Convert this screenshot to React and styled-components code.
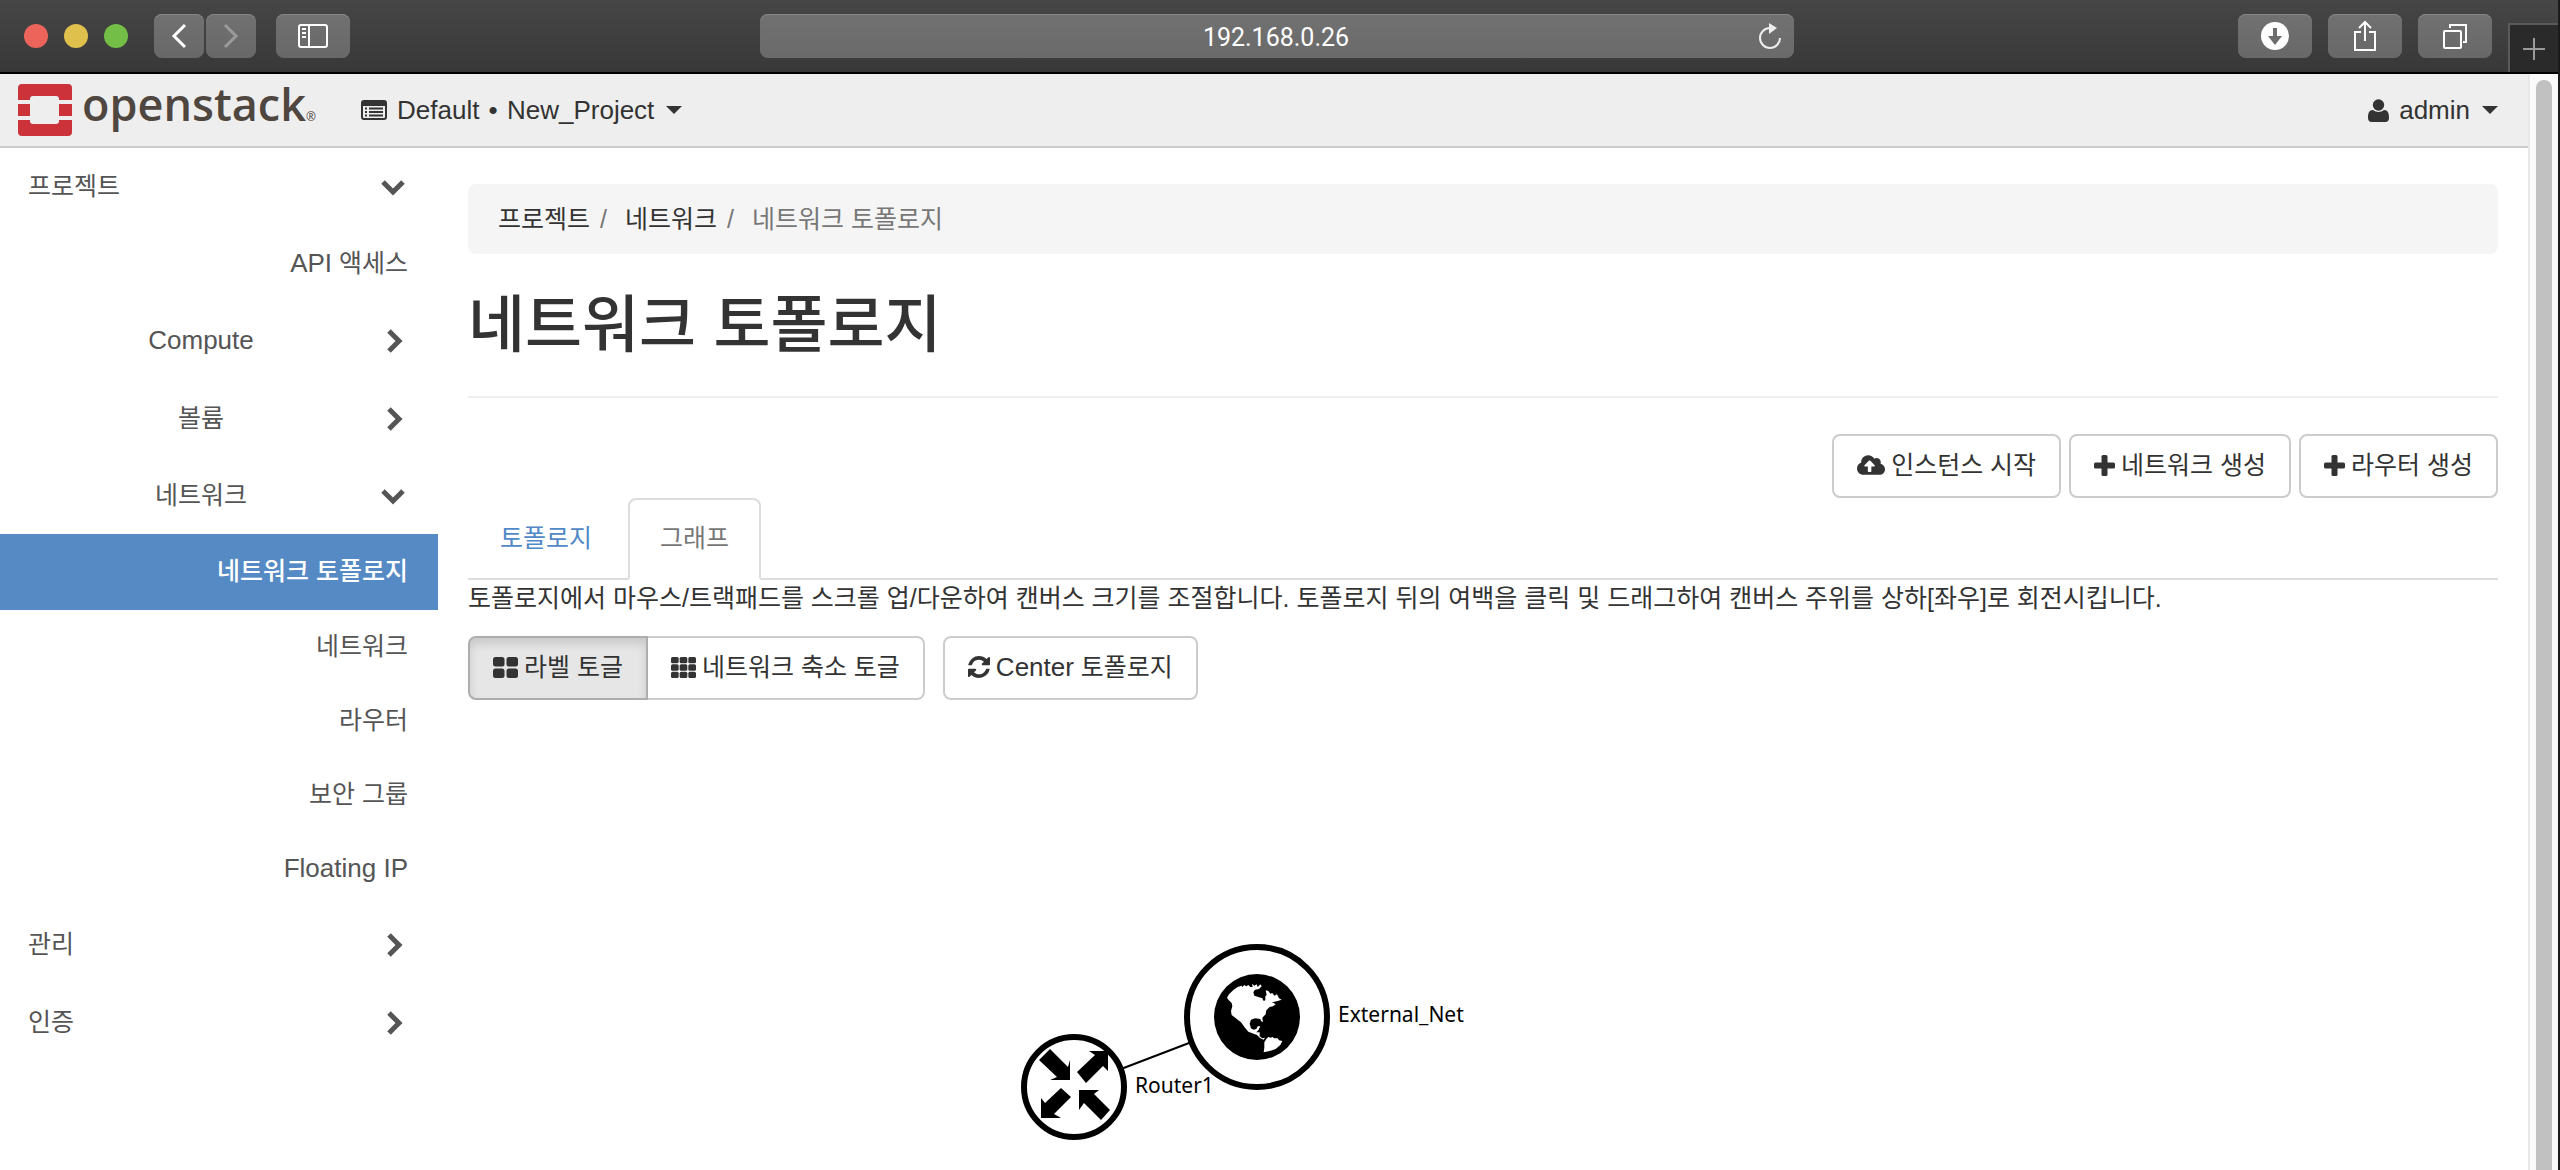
import styled, { createGlobalStyle } from "styled-components";
import { FaCloudUploadAlt } from "react-icons/fa";

const GlobalStyle = createGlobalStyle`
  * {
    box-sizing: border-box;
  }

  body {
    margin: 0;
    background: #fff;
    color: #333;
    font-family: "Liberation Sans", "Noto Sans CJK KR", sans-serif;
    font-size: 25px;
    line-height: 36px;
  }

  button,
  input {
    font: inherit;
    color: inherit;
  }

  a {
    color: inherit;
    text-decoration: none;
  }

  ul,
  ol {
    margin: 0;
    padding: 0;
    list-style: none;
  }
`;

const Window = styled.div`
  display: flex;
  flex-direction: column;
  height: 100vh;
  overflow: hidden;
  border-right: 2px solid #1c1a1c;
`;

/* browser toolbar */

const Toolbar = styled.div`
  display: flex;
  flex: none;
  align-items: flex-start;
  height: 74px;
  padding: 14px 0 0 24px;
  background: linear-gradient(#464646, #383838);
  border-bottom: 2px solid #000;
`;

const Lights = styled.div`
  display: flex;
  gap: 16px;
  align-items: center;
  height: 44px;
  margin-right: 26px;
`;

const Light = styled.span`
  width: 24px;
  height: 24px;
  border-radius: 50%;
  background: ${(props) => props.$color};
`;

const ToolGroup = styled.div`
  display: flex;
  gap: ${(props) => props.$gap}px;
`;

const PageTools = styled(ToolGroup)`
  padding-left: 34px;
`;

const ToolButton = styled.button`
  display: flex;
  align-items: center;
  justify-content: center;
  width: ${(props) => (props.$narrow ? 50 : 74)}px;
  height: 44px;
  padding: 0;
  border: 0;
  border-radius: 8px;
  background: linear-gradient(#717171, #686868);
  box-shadow: inset 0 1px 0 #868686;
  color: ${(props) => (props.$dim ? "#9a9a9a" : "#fff")};
`;

const Address = styled.div`
  display: flex;
  flex: 0 1 1034px;
  align-items: center;
  height: 44px;
  margin: 0 auto;
  padding: 0 12px 0 34px;
  border-radius: 8px;
  background: linear-gradient(#717171, #6a6a6a);
  box-shadow: inset 0 1px 0 #868686;
`;

const AddressInput = styled.input`
  flex: 1;
  min-width: 0;
  height: 44px;
  padding: 2px 0 0;
  border: 0;
  background: none;
  color: #fff;
  font-family: Roboto, sans-serif;
  text-align: center;
`;

const Reload = styled.button`
  display: flex;
  padding: 0;
  border: 0;
  background: none;
`;

const NewTab = styled.button`
  display: flex;
  align-items: center;
  justify-content: center;
  align-self: flex-end;
  width: 50px;
  height: 49px;
  margin-left: 16px;
  padding: 0;
  border: 0;
  border-top: 2px solid #5a5a5a;
  border-left: 2px solid #5a5a5a;
  background: #2a2a2a;
`;

const Viewport = styled.div`
  display: flex;
  flex: 1;
  min-height: 0;
`;

const Page = styled.div`
  flex: 1;
  min-width: 0;
`;

const ScrollTrack = styled.div`
  width: 30px;
  padding: 6px 6px 0;
  background: #fafafa;
  border-left: 2px solid #e8e8e8;
`;

const ScrollThumb = styled.div`
  width: 16px;
  height: 100%;
  border-radius: 8px 8px 0 0;
  background: #c1c1c1;
`;

/* page header */

const Header = styled.header`
  display: flex;
  align-items: center;
  justify-content: space-between;
  height: 74px;
  padding: 0 30px 0 18px;
  background: #eee;
  border-bottom: 2px solid #ccc;
`;

const HeaderLeft = styled.div`
  display: flex;
  align-items: center;
`;

const Brand = styled.a`
  display: flex;
  align-items: center;
  gap: 10px;
  width: 343px;
`;

const BrandName = styled.span`
  color: #4f463f;
  font-family: "Open Sans", sans-serif;
  font-size: 45px;
  font-weight: 600;
  line-height: 52px;

  small {
    font-size: 12px;
    font-weight: 400;
  }
`;

const Menu = styled.button`
  display: flex;
  align-items: center;
  gap: ${(props) => props.$gap}px;
  padding: 0;
  border: 0;
  background: none;
  font-size: 26px;

  svg:last-child {
    margin-left: ${(props) => 12 - props.$gap}px;
  }
`;

const Bullet = styled.span`
  padding: 0 2px;
`;

const Columns = styled.div`
  display: flex;
  align-items: flex-start;
`;

/* sidebar */

const Sidebar = styled.nav`
  flex: none;
  width: 438px;
`;

const SideLink = styled.a`
  display: grid;
  grid-template-columns: 1fr 24px;
  align-items: center;
  height: ${(props) => props.$height || 78}px;
  padding: 0 33px 0 28px;
  color: #555;

  span {
    padding-bottom: 2px;
  }
`;

const SubLink = styled(SideLink)`
  grid-template-columns: 108px 24px;
  justify-content: space-between;
  padding-left: 147px;
  text-align: center;
`;

const LeafLink = styled(SideLink)`
  grid-template-columns: 1fr;
  padding: 0 30px;
  background: ${(props) => (props.$active ? "#558ac5" : "none")};
  color: ${(props) => (props.$active ? "#fff" : "#555")};
  font-weight: ${(props) => (props.$active ? 500 : 400)};
  text-align: right;
`;

const Latin = styled.span`
  font-size: 26px;
`;

/* content */

const Content = styled.main`
  flex: 1;
  min-width: 0;
  padding: 36px 30px 0;
`;

const Breadcrumb = styled.ol`
  display: flex;
  height: 70px;
  padding: 17px 30px;
  border-radius: 8px;
  background: #f5f5f5;

  li + li::before {
    content: "/";
    padding: 0 18px 0 10px;
    color: #777;
  }

  li:last-child {
    color: #777;
  }
`;

const Title = styled.h1`
  margin: 0;
  padding: 28px 0 26px;
  border-bottom: 2px solid #eee;
  font-size: 62px;
  font-weight: 500;
  line-height: 88px;
`;

const Actions = styled.div`
  display: flex;
  justify-content: flex-end;
  gap: 8px;
  padding-top: 36px;
`;

const Button = styled.button`
  display: flex;
  align-items: center;
  gap: 6px;
  height: 64px;
  padding: 0 23px 2px;
  border: 2px solid #ccc;
  border-radius: 8px;
  background: #fff;
  white-space: nowrap;

  svg {
    flex: none;
  }
`;

const GroupButton = styled(Button)`
  border-radius: 0 8px 8px 0;
  border-left: 0;
`;

const PressedButton = styled(Button)`
  border-color: #adadad;
  border-radius: 8px 0 0 8px;
  background: #e6e6e6;
  box-shadow: inset 0 6px 10px rgba(0, 0, 0, 0.125);
`;

const Tabs = styled.ul`
  display: flex;
  gap: 4px;
  border-bottom: 2px solid #ddd;
`;

const Tab = styled.li`
  height: 82px;
  margin-bottom: -2px;
  padding: 20px 30px;
  border: 2px solid ${(props) => (props.$active ? "#ddd" : "transparent")};
  border-bottom-color: ${(props) => (props.$active ? "#fff" : "transparent")};
  border-radius: 8px 8px 0 0;
  color: ${(props) => (props.$active ? "#777" : "#5189c7")};
`;

const Hint = styled.p`
  margin: 0;
`;

const Controls = styled.div`
  display: flex;
  gap: 18px;
  padding-top: 20px;
`;

const ButtonGroup = styled.div`
  display: flex;
`;

const Canvas = styled.svg`
  display: block;
  width: 100%;
  height: 470px;
  font-family: "Noto Sans", sans-serif;
  font-size: 21px;
`;

const Caret = () => (
  <svg width="16" height="8" viewBox="0 0 16 8">
    <path d="M0 0h16L8 8z" fill="#333" />
  </svg>
);

const Chevron = ({ open }) => (
  <svg width="24" height="24" viewBox="0 0 24 24">
    <path
      d={open ? "M2 7l10 10L22 7" : "M8 2l10 10L8 22"}
      fill="none"
      stroke="#555"
      strokeWidth="5"
    />
  </svg>
);

const OpenStackMark = () => (
  <svg width="54" height="52" viewBox="0 0 54 52" fill="#cb3239">
    <path d="M4 0h46a4 4 0 0 1 4 4v12H41v-1a3 3 0 0 0-3-3H15a3 3 0 0 0-3 3v1H0V4a4 4 0 0 1 4-4z" />
    <path d="M0 20h12v12H0zM41 20h13v12H41z" />
    <path d="M4 52h46a4 4 0 0 0 4-4V36H41v1a3 3 0 0 1-3 3H15a3 3 0 0 1-3-3v-1H0v12a4 4 0 0 0 4 4z" />
  </svg>
);

const ProjectIcon = () => (
  <svg width="26" height="20" viewBox="0 0 26 20">
    <rect x="1" y="1" width="24" height="18" rx="2" fill="none" stroke="#333" strokeWidth="2" />
    <path d="M1 1h24v5H1z" fill="#333" />
    <path
      d="M4 8.500h2M8 8.500h14M4 12h2M8 12h14M4 15.500h2M8 15.500h14"
      stroke="#333"
      strokeWidth="2"
    />
  </svg>
);

const UserIcon = () => (
  <svg width="21" height="23" viewBox="0 0 21 23" fill="#333">
    <circle cx="10.500" cy="6" r="5.700" />
    <path d="M0 19c0-5 1-8 5-8 1.500 1.300 3.500 2 5.500 2s4-.7 5.500-2c4 0 5 3 5 8 0 2.500-1.500 4-3.500 4h-14C1.500 23 0 21.500 0 19z" />
  </svg>
);

const PlusIcon = () => (
  <svg width="21" height="21" viewBox="0 0 21 21" fill="#333">
    <rect x="7.500" y="0" width="6" height="21" rx="1.500" />
    <rect x="0" y="7.500" width="21" height="6" rx="1.500" />
  </svg>
);

const GridIcon = ({ columns }) => {
  const gap = columns === 2 ? 2 : 1;
  const w = (25 - gap * (columns - 1)) / columns;
  const h = (21 - gap * (columns - 1)) / columns;
  const cells = [...Array(columns * columns).keys()];
  return (
    <svg width="25" height="21" viewBox="0 0 25 21" fill="#333">
      {cells.map((i) => (
        <rect
          key={i}
          x={(i % columns) * (w + gap)}
          y={Math.floor(i / columns) * (h + gap)}
          width={w}
          height={h}
          rx={columns === 2 ? 2.5 : 1.5}
        />
      ))}
    </svg>
  );
};

const RefreshIcon = () => (
  <svg width="22" height="22" viewBox="0 128 1536 1536" fill="#333">
    <path d="M1511 1056q0 5-1 7-64 268-268 434.500T764 1664q-146 0-282.500-55T238 1452l-129 129q-19 19-45 19t-45-19-19-45v-448q0-26 19-45t45-19h448q26 0 45 19t19 45-19 45l-137 137q71 66 161 102t187 36q134 0 250-65t186-179q11-17 53-117 8-23 30-23h192q13 0 22.500 9.500t9.500 22.500zm25-800v448q0 26-19 45t-45 19h-448q-26 0-45-19t-19-45 19-45l138-138Q969 384 768 384q-134 0-250 65T332 628q-11 17-53 117-8 23-30 23H50q-13 0-22.500-9.500T18 736v-7q65-268 270-434.500T768 128q146 0 284 55.500T1297 340l130-129q19-19 45-19t45 19 19 45z" />
  </svg>
);

const RouterNode = () => (
  <g>
    <circle cx="606" cy="387" r="50" fill="#fff" stroke="#000" strokeWidth="6" />
    <path d="M582 349l18 18 2-7v20h-20l7-3-18-17z" />
    <path d="M609 372l18-17-6-4h19v20l-5-5-17 17z" />
    <path d="M593 388l10 9-17 17 7 4h-20v-20l4 5z" />
    <path d="M611 390h20l-5 4 16 16-9 10-17-17-5 7z" />
    <text x="667" y="393">Router1</text>
  </g>
);

const NetworkNode = () => (
  <g>
    <circle cx="789" cy="317" r="70" fill="#fff" stroke="#000" strokeWidth="6" />
    <circle cx="789" cy="317" r="43" />
    <g transform="translate(737 265) scale(0.3333)" fill="#fff">
      <path d="M66 98l6-10 14-14 12-8 12-4 2 4 6-6 6 4 6-4 6 6h7l-2-10 7 6 7-4 3 8 8-8 4 6-8 8-12 2-5 8 3 10 12 4 12 4 4 8 5-2V94l4-4-3-14 8 2 6 8 6-2 6 8 8-4 6 12 8 4-12 4-10 2-8 4h6l6 4-8 6-10 2-10 10-2 12-10 10 2 14-6-4-2-6-16-2-12 4-4 12 4 14 8 4 8-2 4-8h8l-6 12-6 6h10v12l8 6 8-2-4 6-10-4-10-10-10-4-16-6-10-12-12-16-10-8-10-8-8-6-2-12 4-14-2-10-10-10z" />
      <path d="M178 232l6-10 6-6 8 2 4-2 6 4 10 0 4 6 10 2-6 12-14 12-18 6-18 4 2-14z" />
    </g>
    <text x="870" y="322">External_Net</text>
  </g>
);

const networkItems = [
  { label: "네트워크 토폴로지", active: true, height: 76 },
  { label: "네트워크", height: 74 },
  { label: "라우터", height: 74 },
  { label: "보안 그룹", height: 74 },
  { label: <Latin>Floating IP</Latin>, height: 74 },
];

function BrowserBar() {
  return (
    <Toolbar>
      <Lights>
        <Light $color="#ed655a" />
        <Light $color="#e0c04c" />
        <Light $color="#72be47" />
      </Lights>
      <ToolGroup $gap={20}>
        <ToolGroup $gap={2}>
          <ToolButton $narrow aria-label="Back">
            <svg width="16" height="26" fill="none" stroke="currentColor" strokeWidth="3">
              <path d="M14 2L3 13l11 11" />
            </svg>
          </ToolButton>
          <ToolButton $narrow $dim aria-label="Forward">
            <svg width="16" height="26" fill="none" stroke="currentColor" strokeWidth="3">
              <path d="M2 2l11 11L2 24" />
            </svg>
          </ToolButton>
        </ToolGroup>
        <ToolButton aria-label="Sidebar">
          <svg width="30" height="24" fill="none" stroke="currentColor" strokeWidth="2">
            <rect x="1" y="1" width="28" height="22" rx="2" />
            <path d="M11 1v22M4 5h4M4 9h4M4 13h4" />
          </svg>
        </ToolButton>
      </ToolGroup>
      <Address>
        <AddressInput aria-label="Address" defaultValue="192.168.0.26" />
        <Reload aria-label="Reload">
          <svg width="24" height="28" fill="none" stroke="#eee" strokeWidth="2">
            <path d="M12 6a10 10 0 1 0 10 10" />
            <path d="M11 1l8 5-8 6z" fill="#eee" stroke="none" />
          </svg>
        </Reload>
      </Address>
      <PageTools $gap={16}>
        <ToolButton aria-label="Downloads">
          <svg width="28" height="28">
            <circle cx="14" cy="14" r="14" fill="#fff" />
            <path d="M12 6h4v8h5l-7 9-7-9h5z" fill="#6c6c6c" />
          </svg>
        </ToolButton>
        <ToolButton aria-label="Share">
          <svg width="24" height="32" fill="none" stroke="currentColor" strokeWidth="2">
            <path d="M8 12H2v18h20V12h-6M12 21V3M6 8l6-6 6 6" />
          </svg>
        </ToolButton>
        <ToolButton aria-label="Tabs">
          <svg width="26" height="26" fill="none" stroke="currentColor" strokeWidth="2">
            <rect x="2" y="8" width="17" height="17" rx="1" />
            <path d="M8 5V2h16v17h-3" />
          </svg>
        </ToolButton>
      </PageTools>
      <NewTab aria-label="New tab">
        <svg width="22" height="22" stroke="#999" strokeWidth="2">
          <path d="M11 0v22M0 11h22" />
        </svg>
      </NewTab>
    </Toolbar>
  );
}

function SideNav() {
  return (
    <Sidebar>
      <SideLink href="#project">
        <span>프로젝트</span>
        <Chevron open />
      </SideLink>
      <LeafLink href="#api" $height={76}>
        <span>
          <Latin>API</Latin> 액세스
        </span>
      </LeafLink>
      <SubLink href="#compute">
        <Latin>Compute</Latin>
        <Chevron />
      </SubLink>
      <SubLink href="#volumes">
        <span>볼륨</span>
        <Chevron />
      </SubLink>
      <SubLink href="#network" $height={76}>
        <span>네트워크</span>
        <Chevron open />
      </SubLink>
      {networkItems.map((item, i) => (
        <LeafLink key={i} href="#topology" $active={item.active} $height={item.height}>
          <span>{item.label}</span>
        </LeafLink>
      ))}
      <SideLink href="#admin">
        <span>관리</span>
        <Chevron />
      </SideLink>
      <SideLink href="#identity">
        <span>인증</span>
        <Chevron />
      </SideLink>
    </Sidebar>
  );
}

function Topology() {
  return (
    <Content>
      <Breadcrumb>
        <li>
          <a href="#project">프로젝트</a>
        </li>
        <li>
          <a href="#network">네트워크</a>
        </li>
        <li>네트워크 토폴로지</li>
      </Breadcrumb>
      <Title>네트워크 토폴로지</Title>
      <Actions>
        <Button>
          <FaCloudUploadAlt size={28} />
          인스턴스 시작
        </Button>
        <Button>
          <PlusIcon />
          네트워크 생성
        </Button>
        <Button>
          <PlusIcon />
          라우터 생성
        </Button>
      </Actions>
      <Tabs>
        <Tab>
          <a href="#topology">토폴로지</a>
        </Tab>
        <Tab $active>
          <a href="#graph">그래프</a>
        </Tab>
      </Tabs>
      <Hint>
        토폴로지에서 마우스/트랙패드를 스크롤 업/다운하여 캔버스 크기를 조절합니다. 토폴로지 뒤의
        여백을 클릭 및 드래그하여 캔버스 주위를 상하[좌우]로 회전시킵니다.
      </Hint>
      <Controls>
        <ButtonGroup>
          <PressedButton aria-pressed="true">
            <GridIcon columns={2} />
            라벨 토글
          </PressedButton>
          <GroupButton>
            <GridIcon columns={3} />
            네트워크 축소 토글
          </GroupButton>
        </ButtonGroup>
        <Button>
          <RefreshIcon />
          <span>
            <Latin>Center</Latin> 토폴로지
          </span>
        </Button>
      </Controls>
      <Canvas>
        <path d="M606 387L789 317" stroke="#000" strokeWidth="2" />
        <NetworkNode />
        <RouterNode />
      </Canvas>
    </Content>
  );
}

export default function App() {
  return (
    <>
      <GlobalStyle />
      <Window>
        <BrowserBar />
        <Viewport>
          <Page>
            <Header>
              <HeaderLeft>
                <Brand href="#home">
                  <OpenStackMark />
                  <BrandName>
                    openstack<small>®</small>
                  </BrandName>
                </Brand>
                <Menu $gap={10}>
                  <ProjectIcon />
                  <span>
                    Default <Bullet>•</Bullet> New_Project
                  </span>
                  <Caret />
                </Menu>
              </HeaderLeft>
              <Menu $gap={10}>
                <UserIcon />
                admin
                <Caret />
              </Menu>
            </Header>
            <Columns>
              <SideNav />
              <Topology />
            </Columns>
          </Page>
          <ScrollTrack>
            <ScrollThumb />
          </ScrollTrack>
        </Viewport>
      </Window>
    </>
  );
}
